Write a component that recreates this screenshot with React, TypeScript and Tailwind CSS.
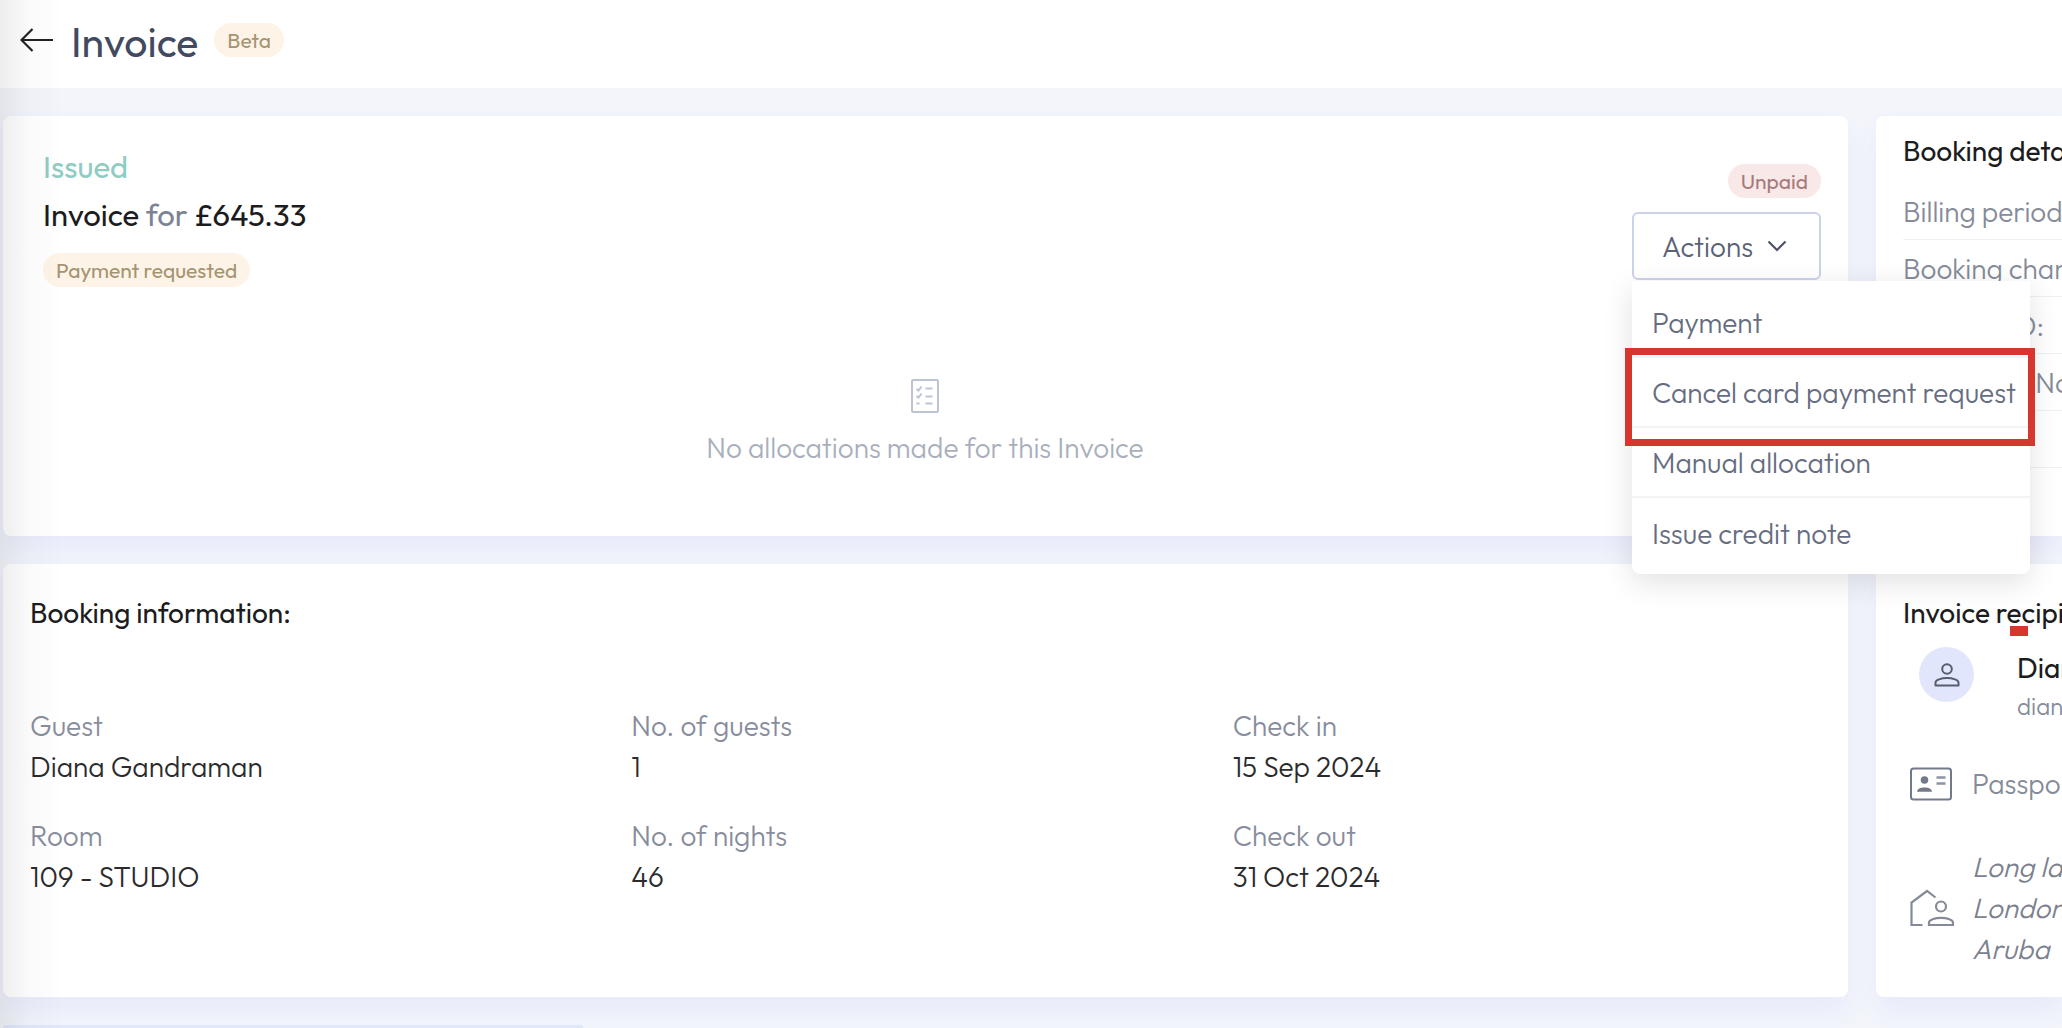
import React from 'react';

interface Detail {
  label: string;
  value: string;
}

const bookingInfo: Detail[] = [
  { label: 'Guest', value: 'Diana Gandraman' },
  { label: 'No. of guests', value: '1' },
  { label: 'Check in', value: '15 Sep 2024' },
  { label: 'Room', value: '109 - STUDIO' },
  { label: 'No. of nights', value: '46' },
  { label: 'Check out', value: '31 Oct 2024' },
];

const bookingDetails = ['Billing period:', 'Booking channel:', 'Booking ID:', 'Reference No:', '', ''];

const actions = ['Payment', 'Cancel card payment request', 'Manual allocation', 'Issue credit note'];

const Badge = ({ tone, children }: { tone: 'amber' | 'red'; children: React.ReactNode }) => (
  <span
    className={`inline-block rounded-full px-[13px] text-[21px] leading-[34px] font-normal whitespace-nowrap ${
      tone === 'amber' ? 'bg-[#fdf4e7] text-[#a59372]' : 'bg-[#f9e8e8] text-[#a67a7a]'
    }`}
  >
    {children}
  </span>
);

const Card = ({ className = '', children }: { className?: string; children: React.ReactNode }) => (
  <section className={`bg-white shadow-[0_14px_24px_rgba(90,100,240,0.07)] ${className}`}>{children}</section>
);

const ChecklistIcon = () => (
  <svg width="28" height="34" viewBox="0 0 28 34" fill="none" stroke="#bcc3d2" strokeWidth="2" aria-hidden="true">
    <rect x="1" y="1" width="26" height="32" rx="1" />
    <path d="M14.5 9.5h7M14.5 17.5h7M14.5 24.5h7M5.5 24.5h3" />
    <path d="M5.5 10l2 1.5 3-4M5.5 17l2 1.5 3-4" />
  </svg>
);

const PersonIcon = () => (
  <svg width="26" height="26" viewBox="0 0 26 26" fill="none" stroke="#565d70" strokeWidth="2" aria-hidden="true">
    <circle cx="13" cy="7" r="4.8" />
    <path d="M1.5 23.5v-3c0-2.4 5.5-4.5 11.5-4.5s11.5 2.1 11.5 4.5v3z" strokeLinejoin="round" />
  </svg>
);

const IdCardIcon = () => (
  <svg width="42" height="34" viewBox="0 0 42 34" className="shrink-0" aria-hidden="true">
    <rect x="1" y="1.5" width="40" height="31" rx="2.5" fill="none" stroke="#727989" strokeWidth="2" />
    <circle cx="14.5" cy="13" r="3.8" fill="#727989" />
    <path d="M7 24.8c0-3 3.5-4.4 7.5-4.4s7.5 1.4 7.5 4.4z" fill="#727989" />
    <path d="M26.5 10.5h9M26.5 16.5h9" stroke="#8c92a1" strokeWidth="2.6" />
  </svg>
);

const HomeAddressIcon = () => (
  <svg
    width="44"
    height="38"
    viewBox="0 0 44 38"
    fill="none"
    stroke="#848a98"
    strokeWidth="2.2"
    className="shrink-0"
    aria-hidden="true"
  >
    <path d="M12.5 36H1.5V13.5L17 2l8.5 6.5" />
    <circle cx="31" cy="17.5" r="5" />
    <path d="M19 36v-2.5c0-2.5 5.5-4.7 12-4.7s12 2.2 12 4.7V36z" />
  </svg>
);

const ActionsMenu = () => (
  <div className="relative z-10">
    <button className="flex h-[68px] w-[189px] items-center justify-between rounded-md border-2 border-[#ccd2ea] bg-white pr-8 pl-7 text-[#5a6275]">
      Actions
      <svg width="20" height="12" viewBox="0 0 20 12" fill="none" stroke="#4b5369" strokeWidth="2.2" aria-hidden="true">
        <path d="M1.5 1.5L10 10l8.5-8.5" />
      </svg>
    </button>
    <div className="absolute top-[69px] left-0 w-[398px] rounded-b-lg bg-white pt-[7px] pb-1.5 shadow-[0_8px_30px_rgba(0,0,0,0.12)]">
      <div className="divide-y-2 divide-[#f3f4f6]">
        {actions.map((action) => (
          <button key={action} className="block h-[70px] w-full pl-5 text-left whitespace-nowrap text-[#666d80]">
            {action}
          </button>
        ))}
      </div>
      <div className="pointer-events-none absolute top-[67px] -left-[7px] h-[98px] w-[410px] border-[7px] border-[#d5372c]" />
    </div>
  </div>
);

export default function App() {
  return (
    <div className="relative min-h-screen overflow-x-clip bg-[#f3f5fb] font-['Outfit','Lato',sans-serif] text-[28px] leading-[41px] font-light">
      <header className="flex h-[88px] items-start bg-white pl-5">
        <a href="#" aria-label="Back" className="mt-7">
          <svg width="34" height="24" viewBox="0 0 34 24" fill="none" stroke="#222" strokeWidth="2.2" aria-hidden="true">
            <path d="M33 12H1.5M12.5 1l-11 11 11 11" />
          </svg>
        </a>
        <h1 className="mt-4 ml-[17px] text-[41px] leading-[52px] font-normal text-[#414a61]">Invoice</h1>
        <div className="mt-[23px] ml-4 flex">
          <Badge tone="amber">Beta</Badge>
        </div>
      </header>

      <main className="grid grid-cols-[minmax(0,1fr)_186px] gap-7 pt-7 pl-[3px]">
        <Card className="flex flex-col rounded-lg pr-[27px] pl-10">
          <div className="flex items-start justify-between">
            <div className="pt-[30px]">
              <p className="text-[31px] font-normal text-[#8fccc2]">Issued</p>
              <h2 className="mt-[7px] text-[31px] font-normal text-[#1c1c1e]">
                Invoice <span className="text-[#7c8394]">for</span> £645.33
              </h2>
              <div className="mt-[18px] flex">
                <Badge tone="amber">Payment requested</Badge>
              </div>
            </div>
            <div className="flex flex-col items-end gap-3.5 pt-12">
              <div className="flex">
                <Badge tone="red">Unpaid</Badge>
              </div>
              <ActionsMenu />
            </div>
          </div>
          <div className="mt-[92px] mb-[68px] flex flex-col items-center gap-3.5 pr-3.5 text-[#a9afbc]">
            <ChecklistIcon />
            <p>No allocations made for this Invoice</p>
          </div>
        </Card>

        <Card className="overflow-hidden rounded-l-lg pt-3.5 pl-[27px] whitespace-nowrap">
          <h2 className="font-normal text-[#1c1c1e]">Booking details</h2>
          <ul className="mt-3">
            {bookingDetails.map((label, i) => (
              <li key={i} className="h-[57px] border-b border-[#eff0f3] pt-2 text-[#858b99] last:border-b-0">
                {label}
              </li>
            ))}
          </ul>
        </Card>

        <Card className="rounded-lg pt-7 pr-3.5 pb-[100px] pl-[27px]">
          <h2 className="font-normal text-[#1c1c1e]">Booking information:</h2>
          <dl className="mt-[72px] grid grid-cols-3 gap-y-7">
            {bookingInfo.map(({ label, value }) => (
              <div key={label}>
                <dt className="text-[#878d9c]">{label}</dt>
                <dd className="text-[#2b2b2d]">{value}</dd>
              </div>
            ))}
          </dl>
        </Card>

        <Card className="overflow-hidden rounded-l-lg pt-7 pb-7 pl-[27px] whitespace-nowrap">
          <h2 className="relative font-normal text-[#1c1c1e]">
            Invoice recipient
            <span className="absolute top-[34px] left-[107px] h-2.5 w-[18px] bg-[#d5372c]" />
          </h2>
          <div className="mt-3.5 flex gap-[43px] pl-4">
            <div className="flex size-[55px] shrink-0 items-center justify-center rounded-full bg-[#e1e6fc]">
              <PersonIcon />
            </div>
            <div>
              <p className="font-normal text-[#1c1c1e]">Diana Gandraman</p>
              <p className="text-2xl leading-9 text-[#858b99]">diana.gandraman</p>
            </div>
          </div>
          <div className="mt-[39px] flex items-center gap-5 pl-[7px] text-[#858b99]">
            <IdCardIcon />
            <p>Passport:</p>
          </div>
          <div className="mt-[42px] flex items-center gap-[18px] pl-[7px] text-[#7b8190]">
            <HomeAddressIcon />
            <address>
              Long lane
              <br />
              London
              <br />
              Aruba
            </address>
          </div>
        </Card>

        <div className="h-[3px] w-[580px] rounded-t-lg bg-[#e1e7fb]" />
      </main>

      <div className="pointer-events-none absolute inset-y-0 left-0 w-16 bg-[linear-gradient(to_right,rgba(0,0,0,0.07),rgba(0,0,0,0.02)_45%,transparent)]" />
    </div>
  );
}
